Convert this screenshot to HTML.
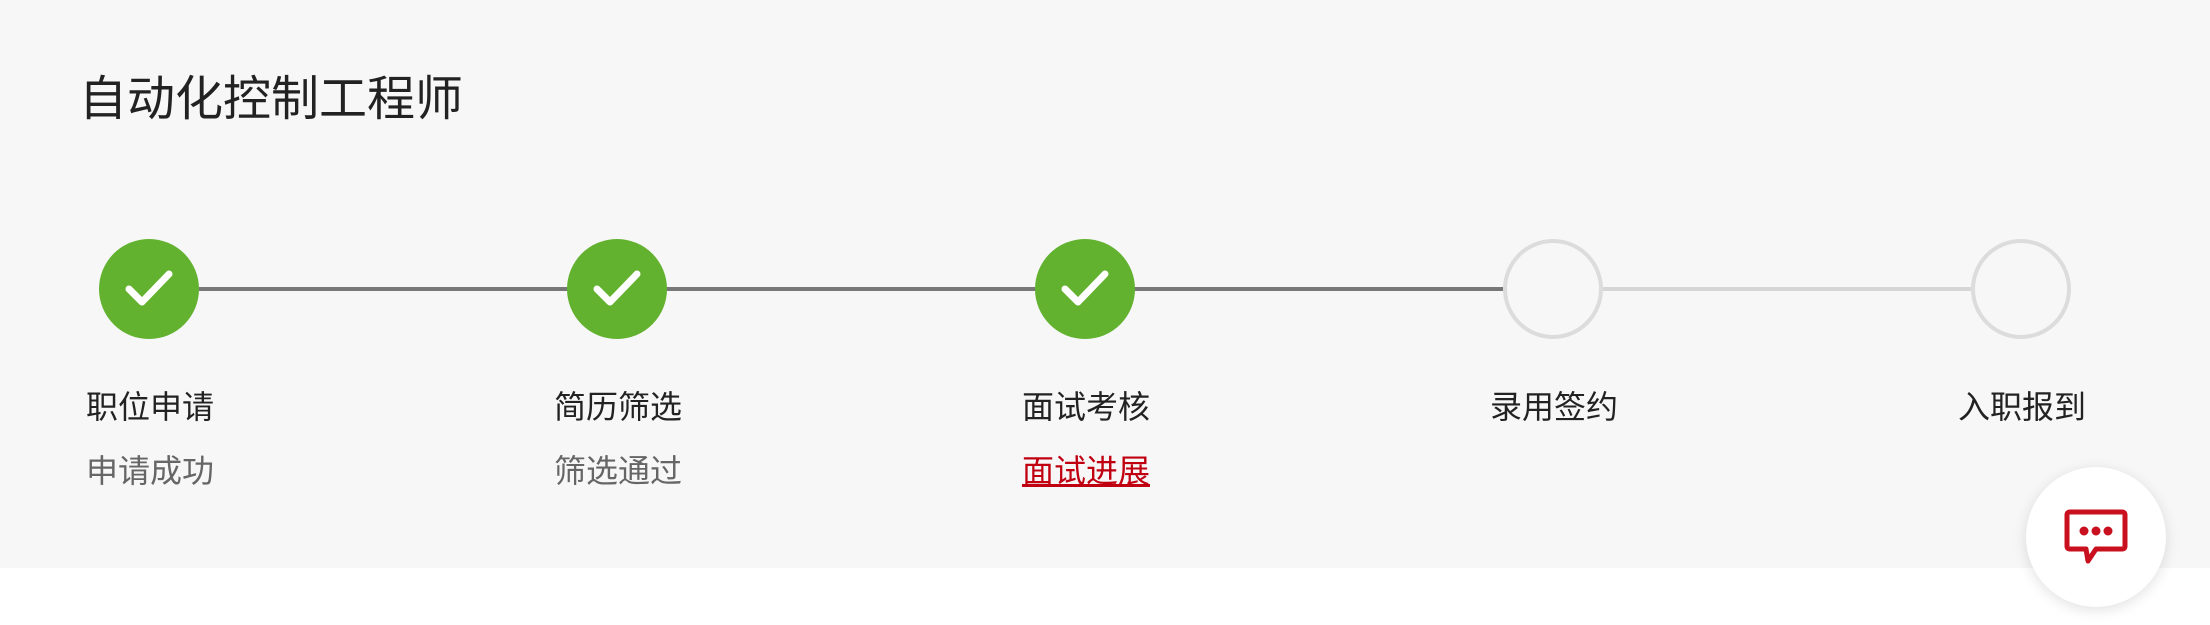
<!DOCTYPE html>
<html><head><meta charset="utf-8"><style>
html,body{margin:0;padding:0;width:2210px;height:625px;overflow:hidden;background:#fff;font-family:"Liberation Sans","Noto Sans CJK SC",sans-serif}
.bg{position:absolute;left:0;top:0;width:2210px;height:568px;background:#f7f7f7}
.title{position:absolute;left:79px;top:70px;font-size:48px;line-height:60px;color:#222}
.line{position:absolute;top:287px;height:4px}
.c{position:absolute;top:239px;width:100px;height:100px;border-radius:50%;box-sizing:border-box}
.done{background:#62b22f}
.todo{border:4px solid #dcdcdc;background:#f7f7f7}
.c svg{position:absolute;left:25px;top:25px}
.l{position:absolute;width:240px;text-align:center;font-size:32px;line-height:40px;color:#222}
.s{color:#666}
.s a{color:#c00010;text-decoration:underline}
.chat{position:absolute;left:2026px;top:467px;width:140px;height:140px;border-radius:50%;background:#fff;box-shadow:0 3px 14px rgba(0,0,0,.12)}
</style></head><body>
<div class="bg"></div>
<div class="title">自动化控制工程师</div>
<div class="line" style="left:199px;width:1304px;background:#777"></div>
<div class="line" style="left:1603px;width:368px;background:#d6d6d6"></div>

<div class="c done" style="left:99px"><svg width="50" height="50" viewBox="0 0 50 50"><path d="M5 25 L18 38 L45 10" fill="none" stroke="#fff" stroke-width="7" stroke-linecap="round" stroke-linejoin="round"/></svg></div>
<div class="c done" style="left:567px"><svg width="50" height="50" viewBox="0 0 50 50"><path d="M5 25 L18 38 L45 10" fill="none" stroke="#fff" stroke-width="7" stroke-linecap="round" stroke-linejoin="round"/></svg></div>
<div class="c done" style="left:1035px"><svg width="50" height="50" viewBox="0 0 50 50"><path d="M5 25 L18 38 L45 10" fill="none" stroke="#fff" stroke-width="7" stroke-linecap="round" stroke-linejoin="round"/></svg></div>
<div class="c todo" style="left:1503px"></div>
<div class="c todo" style="left:1971px"></div>

<div class="l" style="left:30px;top:387px">职位申请</div>
<div class="l s" style="left:30px;top:451px">申请成功</div>
<div class="l" style="left:498px;top:387px">简历筛选</div>
<div class="l s" style="left:498px;top:451px">筛选通过</div>
<div class="l" style="left:966px;top:387px">面试考核</div>
<div class="l s" style="left:966px;top:451px"><a>面试进展</a></div>
<div class="l" style="left:1434px;top:387px">录用签约</div>
<div class="l" style="left:1902px;top:387px">入职报到</div>

<div class="chat"><svg style="position:absolute;left:38px;top:42px" width="64" height="58" viewBox="0 0 64 58"><path d="M6 3 H58 Q61 3 61 6 V37 Q61 40 58 40 H32 L24 52 L22 40 H6 Q3 40 3 37 V6 Q3 3 6 3 Z" fill="none" stroke="#c8101e" stroke-width="5" stroke-linejoin="round"/><circle cx="20" cy="22" r="4.5" fill="#c8101e"/><circle cx="32" cy="22" r="4.5" fill="#c8101e"/><circle cx="44" cy="22" r="4.5" fill="#c8101e"/></svg></div>
</body></html>
